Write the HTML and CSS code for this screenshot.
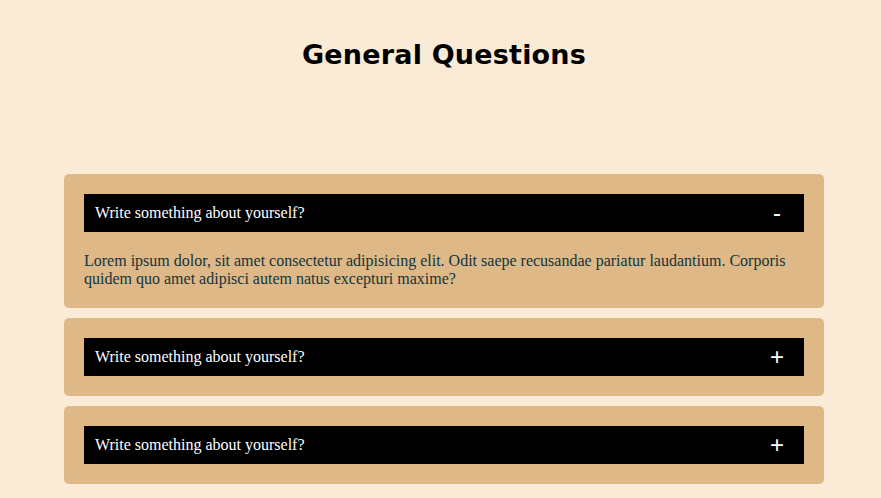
FILE: index.html
```html
<!DOCTYPE html>
<html lang="en">
<head>
<meta charset="utf-8">
<title>General Questions</title>
<link rel="stylesheet" href="styles.css">
</head>
<body>
<h1 class="title">General Questions</h1>
<div class="faq">
  <div class="card">
    <div class="question"><span class="q-text">Write something about yourself?</span><span class="sign minus">-</span></div>
    <p class="answer">Lorem ipsum dolor, sit amet consectetur adipisicing elit. Odit saepe recusandae pariatur laudantium. Corporis quidem quo amet adipisci autem natus excepturi maxime?</p>
  </div>
  <div class="card">
    <div class="question"><span class="q-text">Write something about yourself?</span><span class="sign">+</span></div>
  </div>
  <div class="card">
    <div class="question"><span class="q-text">Write something about yourself?</span><span class="sign">+</span></div>
  </div>
</div>
</body>
</html>
```
FILE: styles.css
```css
html, body {
  margin: 0;
  padding: 0;
}
body {
  background: #faebd7;
  font-family: "Liberation Serif", "Times New Roman", serif;
  padding: 0 57px 0 64px;
}
.title {
  margin: 0;
  padding-top: 35px;
  height: 140px;
  box-sizing: border-box;
  text-align: center;
  font-family: "DejaVu Sans", sans-serif;
  font-weight: bold;
  font-size: 27px;
  letter-spacing: 0.2px;
  line-height: 40px;
  color: #000;
}
.faq {
  display: flex;
  flex-direction: column;
  gap: 10px;
  padding-top: 34px;
}
.card {
  background: #deb887;
  border-radius: 5px;
  padding: 20px;
}
.question {
  background: #000;
  color: #fff;
  height: 38px;
  display: flex;
  align-items: center;
  justify-content: space-between;
  padding: 0 20px 0 11px;
  font-size: 16px;
}
.sign {
  font-family: "Liberation Sans", Arial, sans-serif;
  font-size: 24px;
  line-height: 1;
}
.minus {
  padding-right: 3px;
}
.answer {
  margin: 20px 0 0;
  font-size: 16px;
  line-height: 18px;
  color: #15343a;
}
```
